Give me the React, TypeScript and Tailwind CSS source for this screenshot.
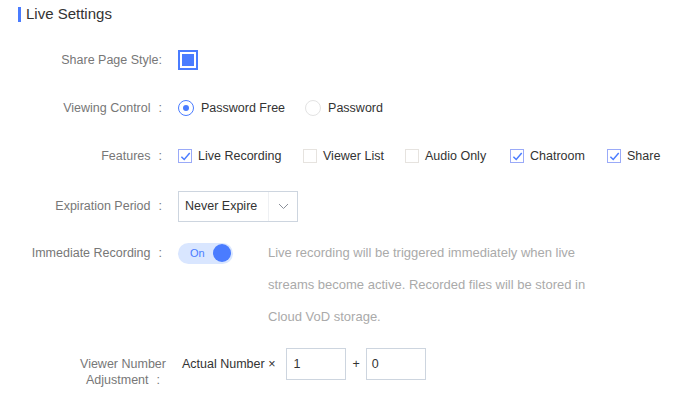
import React from 'react';

const Colon = () => <span className="pl-[8px]">:</span>;

const Label = ({ children, colon = true }: { children: React.ReactNode; colon?: boolean }) => (
  <div className="w-[162px] shrink-0 text-right text-[12.5px] text-[#777]">
    {children}
    {colon && <Colon />}
  </div>
);

const Check = ({ checked, label, w }: { checked?: boolean; label: string; w: string }) => (
  <label className={`flex items-center gap-[6px] text-[12.5px] text-[#333] ${w}`}>
    <span
      className={`flex h-[14px] w-[14px] items-center justify-center border ${
        checked ? 'border-[#9aaaf8]' : 'border-[#e6e3df]'
      }`}
    >
      {checked && (
        <svg width="11" height="11" viewBox="0 0 12 12" fill="none">
          <path d="M1.5 6.2 L4.6 9.3 L10.6 2.2" stroke="#4a7cff" strokeWidth="1.6" />
        </svg>
      )}
    </span>
    {label}
  </label>
);

export default function App() {
  return (
    <div className="h-[408px] w-[684px] overflow-hidden bg-white font-['Liberation_Sans',Arial,sans-serif]">
      {/* Header */}
      <div className="flex h-[28px] items-center pl-[18px]">
        <span className="h-[15px] w-[3px] bg-[#4a7cff]" />
        <span className="ml-[5px] text-[15px] text-[#333]">Live Settings</span>
      </div>

      <div className="pt-[8px]">
        <div className="flex h-12 items-center">
          <Label colon={false}>Share Page Style:</Label>
          <div className="ml-4 flex h-5 w-5 items-center justify-center border-2 border-[#4a7cff]">
            <span className="h-[12px] w-[12px] bg-[#4a7cff]" />
          </div>
        </div>

        <div className="flex h-12 items-center">
          <Label>Viewing Control</Label>
          <div className="ml-4 flex items-center gap-[20px] text-[12.5px] text-[#333]">
            <label className="flex items-center gap-[7px]">
              <span className="flex h-4 w-4 items-center justify-center rounded-full border border-[#4a7cff]">
                <span className="h-[6px] w-[6px] rounded-full bg-[#4a7cff]" />
              </span>
              Password Free
            </label>
            <label className="flex items-center gap-[7px]">
              <span className="h-4 w-4 rounded-full border border-[#e3e3e3]" />
              Password
            </label>
          </div>
        </div>

        <div className="flex h-12 items-center">
          <Label>Features</Label>
          <div className="ml-4 flex items-center">
            <Check checked label="Live Recording" w="w-[125px]" />
            <Check label="Viewer List" w="w-[102px]" />
            <Check label="Audio Only" w="w-[105px]" />
            <Check checked label="Chatroom" w="w-[97px]" />
            <Check checked label="Share" w="" />
          </div>
        </div>

        <div className="flex h-[52px] items-center">
          <Label>Expiration Period</Label>
          <div className="ml-4 flex h-[31px] w-[120px] items-center border border-[#cdd5df] text-[12.5px] text-[#333]">
            <span className="flex-1 pl-[6px]">Never Expire</span>
            <span className="flex h-full w-[29px] items-center justify-center border-l border-[#eef0f3]">
              <svg width="11" height="7" viewBox="0 0 11 7" fill="none">
                <path d="M1 1 L5.5 5.5 L10 1" stroke="#8a8f99" strokeWidth="1" />
              </svg>
            </span>
          </div>
        </div>

        <div className="flex items-start pt-[5px] leading-[32px]">
          <Label>Immediate Recording</Label>
          <div className="ml-4 flex h-[32px] items-center">
            <div className="flex h-[21px] w-[55px] items-center justify-between rounded-full bg-[#d9e6ff] pl-[12px] pr-[2px]">
              <span className="text-[11px] leading-none text-[#4a7cff]">On</span>
              <span className="h-[18px] w-[18px] rounded-full bg-[#4a7cff]" />
            </div>
          </div>
          <p className="ml-[35px] w-[325px] text-[13px] text-[#aaa]">
            Live recording will be triggered immediately when live streams become active. Recorded files will be
            stored in Cloud VoD storage.
          </p>
        </div>

        <div className="flex items-start pt-[15px]">
          <div className="flex w-[162px] shrink-0 justify-end">
            <div className="mr-[-9px] mt-[8px] w-[96px] text-center text-[12.5px] leading-[16px] text-[#777]">
              <div>Viewer Number</div>
              <div>
                Adjustment
                <Colon />
              </div>
            </div>
          </div>
          <div className="ml-4 flex items-center text-[12.5px] text-[#333]">
            <span className="pl-[4px]">Actual Number ×</span>
            <div className="ml-[11px] flex h-[32px] w-[60px] items-center border border-[#cdd5df] pl-[6px]">1</div>
            <span className="mx-[6px]">+</span>
            <div className="flex h-[32px] w-[60px] items-center border border-[#cdd5df] pl-[5px]">0</div>
          </div>
        </div>
      </div>
    </div>
  );
}
